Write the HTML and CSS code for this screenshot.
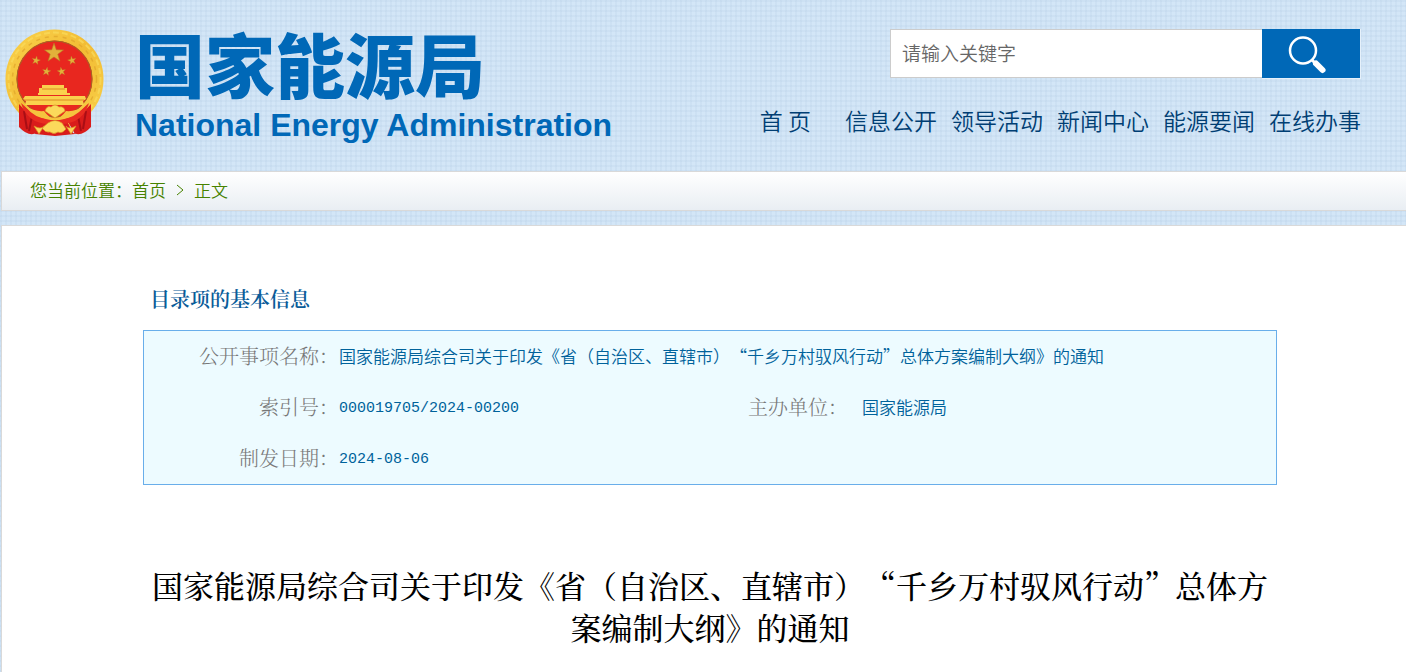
FILE: index.html
```html
<!DOCTYPE html>
<html lang="zh-CN">
<head>
<meta charset="utf-8">
<title>国家能源局</title>
<link rel="stylesheet" href="styles.css">
</head>
<body>
<header class="header">
  <a class="brand" href="#" aria-label="国家能源局">
    <svg class="emblem" viewBox="0 0 100 108" aria-hidden="true">
      <defs>
        <path id="star" d="M0-10 2.3-3.2 9.5-3.1 3.8 1.2 5.9 8.1 0 4 -5.9 8.1 -3.8 1.2 -9.5-3.1 -2.3-3.2Z"/>
        <linearGradient id="gold" x1="0" y1="0" x2="1" y2="1">
          <stop offset="0" stop-color="#f9d04a"/><stop offset=".5" stop-color="#f2bc34"/><stop offset="1" stop-color="#f8cf48"/>
        </linearGradient>
      </defs>
      <ellipse cx="49.500" cy="50" rx="43.500" ry="44" fill="#e8271f" stroke="url(#gold)" stroke-width="11"/>
      <ellipse cx="49.500" cy="50" rx="46" ry="46.500" fill="none" stroke="#fadb5c" stroke-width="2" stroke-dasharray="6 3" opacity=".7"/>
      <ellipse cx="49.500" cy="50" rx="42" ry="42.500" fill="none" stroke="#dfa42b" stroke-width="1.500" stroke-dasharray="4 5" opacity=".7"/>
      <ellipse cx="49.500" cy="50" rx="37.500" ry="38" fill="none" stroke="#a06a24" stroke-width="1"/>
      <g fill="#e2b13a" stroke="#b97724" stroke-width=".6">
        <use href="#star" transform="translate(49 24)"/>
        <use href="#star" transform="translate(31 31.500) rotate(12) scale(.45)"/>
        <use href="#star" transform="translate(67 31.500) rotate(-12) scale(.45)"/>
        <use href="#star" transform="translate(41.500 42.500) rotate(10) scale(.45)"/>
        <use href="#star" transform="translate(56.500 42.500) rotate(-10) scale(.45)"/>
      </g>
      <path d="M37 56h22v3h3v5H34v-5h3zM33 64h32v2H33zM20 67h60l1 3-3 2 1 4H20l1-4-3-2z" fill="#fad14d"/>
      <path d="M37 60h23M19 71h60" stroke="#dc8a25" stroke-width="1"/>
      <path d="M14 75q10 13 25 15l-7 14q-9 4-18-6zM86 75Q76 88 61 90l7 14q9 4 18-6zM38 91h24l8 14-20 2-20-2z" fill="#d91c1b"/>
      <path d="M19 82l3 18M27 87l-3 15M81 82l-3 18M73 87l3 15" stroke="#a90e15" stroke-width="2"/>
      <path d="M16 74q16 16 34 18 18-2 34-18-6 20-27 21H43Q22 94 16 74Z" fill="#e92d21"/>
      <path d="M20 77q10 6 19 5 5 7 11 8 6-1 11-8 9 1 19-5-11 13-24 13H44q-14 0-24-13Z" fill="#f5c43e"/>
      <path d="M40 82q2-6 6-4 4-4 8 0 5-1 6 4l-10 7zM43 94q7-5 14 0l4 6q-4 5-8 3-4 3-8 0-5 1-8-4zM29 97q7 4 10 0l-5 8zM71 97q-7 4-10 0l5 8z" fill="#fbd95b" stroke="#dc9224" stroke-width=".7"/>
    </svg>
    <span class="brand-text">
      <span class="brand-cn">国家能源局</span>
      <span class="brand-en" lang="en">National Energy Administration</span>
    </span>
  </a>
  <div class="tools">
    <form class="search" role="search">
      <input class="search-input" type="text" placeholder="请输入关键字" aria-label="请输入关键字">
      <button class="search-button" type="button" aria-label="搜索">
        <svg class="search-icon" viewBox="0 0 40 40" aria-hidden="true">
          <circle cx="16" cy="15.500" r="13" fill="none" stroke="#fff" stroke-width="2.500"/>
          <path d="M25 25l3 3" stroke="#fff" stroke-width="3"/>
          <path d="M29 28.500l6.500 6.500" stroke="#fff" stroke-width="6" stroke-linecap="round"/>
        </svg>
      </button>
    </form>
    <nav class="nav">
      <a class="nav-link nav-home" href="#">首 页</a>
      <a class="nav-link" href="#">信息公开</a>
      <a class="nav-link" href="#">领导活动</a>
      <a class="nav-link" href="#">新闻中心</a>
      <a class="nav-link" href="#">能源要闻</a>
      <a class="nav-link" href="#">在线办事</a>
    </nav>
  </div>
</header>
<nav class="crumbs" aria-label="当前位置">
  <span>您当前位置：<a class="crumb-link" href="#">首页</a></span>
  <svg class="crumb-arrow" viewBox="0 0 8 12" aria-hidden="true"><path d="M1 1l6 5-6 5" fill="none" stroke="currentColor"/></svg>
  <span>正文</span>
</nav>
<main class="page">
  <article class="article">
    <h2 class="section-title">目录项的基本信息</h2>
    <table class="info">
      <tbody>
        <tr>
          <th class="label" scope="row">公开事项名称：</th>
          <td class="value" colspan="3">国家能源局综合司关于印发《省（自治区、直辖市）“千乡万村驭风行动”总体方案编制大纲》的通知</td>
        </tr>
        <tr>
          <th class="label" scope="row">索引号：</th>
          <td class="value code">000019705/2024-00200</td>
          <th class="label label-host" scope="row">主办单位：</th>
          <td class="value value-host">国家能源局</td>
        </tr>
        <tr>
          <th class="label" scope="row">制发日期：</th>
          <td class="value code" colspan="3">2024-08-06</td>
        </tr>
      </tbody>
    </table>
    <h1 class="title">国家能源局综合司关于印发《省（自治区、直辖市）“千乡万村驭风行动”总体方案编制大纲》的通知</h1>
  </article>
</main>
</body>
</html>
```
FILE: styles.css
```css
* {
  box-sizing: border-box;
}

body {
  margin: 0;
  min-height: 100vh;
  display: flex;
  flex-direction: column;
  background-color: #d3e6f7;
  background-image:
    repeating-linear-gradient(0deg, rgba(170, 196, 222, 0.16) 0 2px, transparent 2px 5px),
    repeating-linear-gradient(90deg, rgba(170, 196, 222, 0.16) 0 2px, transparent 2px 5px);
  font-family: "Noto Sans CJK SC", sans-serif;
  font-weight: 350;
  text-spacing-trim: space-all;
}

a {
  color: inherit;
  text-decoration: none;
}

.header {
  display: flex;
  justify-content: space-between;
  align-items: flex-start;
  padding: 29px 45px 0 5px;
  height: 171px;
}

.brand {
  display: flex;
  gap: 30px;
  color: #0068b7;
}

.emblem {
  width: 100px;
  height: 108px;
}

.brand-text {
  display: flex;
  flex-direction: column;
}

.brand-cn {
  font-size: 70px;
  line-height: 68px;
  font-weight: 900;
}

.brand-en {
  font-family: "Liberation Sans", sans-serif;
  font-size: 32px;
  line-height: 56px;
  font-weight: 700;
}

.tools {
  display: flex;
  flex-direction: column;
  align-items: flex-end;
  gap: 23px;
}

.search {
  display: flex;
  align-items: flex-start;
}

.search-input {
  width: 372px;
  height: 49px;
  padding: 0 11px 2px;
  border: 1px solid #ccc;
  border-right: 0;
  border-radius: 0;
  background: #fff;
  color: #666;
  font: inherit;
  font-size: 19px;
}

.search-input::placeholder {
  color: #666;
}

.search-button {
  display: flex;
  justify-content: center;
  width: 99px;
  height: 50px;
  padding: 6px 8px 0 0;
  border: solid #e6f1fb;
  border-width: 0 1px 1px 0;
  background: #0068b7;
}

.search-icon {
  width: 40px;
  height: 40px;
}

.nav {
  display: flex;
  gap: 14px;
}

.nav-link {
  font-size: 23px;
  line-height: 36px;
  color: #003e73;
  white-space: nowrap;
}

.nav-home {
  margin-right: 20px;
}

.crumbs {
  display: flex;
  align-items: center;
  gap: 10px;
  height: 40px;
  margin-left: 1px;
  padding: 0 0 3px 28px;
  border: 1px solid #d9d9d9;
  border-right: 0;
  background: linear-gradient(#fff, #e9eef3);
  color: #478200;
  font-size: 17px;
}

.crumb-arrow {
  width: 8px;
  height: 12px;
}

.page {
  flex: 1;
  margin: 14px 0 0 1px;
  padding: 59px 129px 20px 141px;
  border: solid #d9d9d9;
  border-width: 1px 0 0 1px;
  background: #fff;
}

.section-title {
  margin: 0 0 18px 7px;
  color: #0a5c99;
  font-family: "Noto Serif CJK SC", "Noto Sans CJK SC", serif;
  font-size: 20px;
  line-height: 27px;
  font-weight: 600;
}

.info {
  width: 100%;
  border: 1px solid #69aeea;
  border-spacing: 0;
  background: #edfbff;
}

.info tr {
  height: 51px;
}

.label,
.value {
  padding: 0 0 2px;
}

.label {
  width: 195px;
  color: #777;
  font-family: "Noto Serif CJK SC", "Noto Sans CJK SC", serif;
  font-size: 20px;
  font-weight: 300;
  text-align: right;
  white-space: nowrap;
}

.value {
  color: #00629b;
  font-size: 17px;
}

.code {
  padding: 2px 0 0;
  font-family: "Liberation Mono", monospace;
  font-size: 15px;
}

.label-host {
  width: 100px;
}

.value-host {
  width: 428px;
  padding-left: 14px;
}

.title {
  margin: 79px 0 0;
  color: #000;
  font-family: "Noto Serif CJK SC", "Noto Sans CJK SC", serif;
  font-size: 31px;
  line-height: 42px;
  font-weight: 500;
  text-align: center;
}
```
